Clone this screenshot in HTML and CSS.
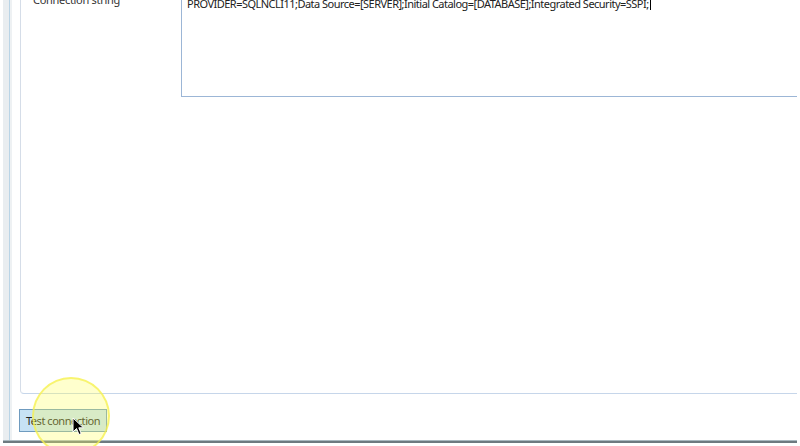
FILE: index.html
```html
<!DOCTYPE html>
<html lang="en">
<head>
    <meta charset="UTF-8">
    <title>Connection</title>
    <link rel="stylesheet" href="styles.css">
</head>
<body>
    <div class="window">
        <div class="edge"></div>
        <div class="main">
            <div class="panel">
                <div class="field">
                    <label class="f_label">Connection string</label>
                    <div class="f_box">
                        <p>PROVIDER=SQLNCLI11;Data Source=[SERVER];Initial Catalog=[DATABASE];Integrated Security=SSPI;<span class="caret"></span></p>
                    </div>
                </div>
            </div>
            <div class="footer">
                <button class="btn">Test connection</button>
            </div>
        </div>
    </div>
    <div class="bottom_line"></div>
    <!-- click highlight + mouse pointer -->
    <div class="spot"></div>
    <svg class="pointer" width="14" height="20" viewBox="0 0 14 20">
        <path d="M1 1 L1 15 L4.5 11.5 L7 17.5 L9.2 16.6 L6.8 10.8 L11.5 10.8 Z" fill="#000" stroke="#fff" stroke-width="1"/>
    </svg>
</body>
</html>
```

FILE: styles.css
```css
html, body {
    margin: 0;
    padding: 0;
    background: #fff;
    overflow: hidden;
}
body {
    width: 800px;
    height: 446px;
    position: relative;
    font-family: "Noto Sans", "Open Sans", sans-serif;
    color: #1e1e1e;
}
.window {
    display: flex;
    height: 440px;
}
.edge {
    width: 6px;
    margin-left: 3px;
    background: #e9edf0;
    border-right: 1px solid #b9d4e6;
    box-shadow: 2px 0 0 #eef1f3;
}
.main {
    flex: 1;
    display: flex;
    flex-direction: column;
    padding-left: 10px;
    padding-right: 3px;
}
.panel {
    height: 394px;
    border-left: 1px solid #d5dde8;
    border-bottom: 1px solid #c6d6ea;
    border-bottom-left-radius: 4px;
    box-sizing: border-box;
}
.field {
    display: flex;
    margin-top: -7px;
}
.f_label {
    width: 148px;
    padding-left: 12px;
    font-size: 11px;
    line-height: 14px;
    letter-spacing: -0.3px;
    color: #333;
}
.f_box {
    flex: 1;
    height: 104px;
    border-left: 1px solid #9cb6d6;
    border-bottom: 1px solid #9cb6d6;
    box-sizing: border-box;
}
.f_box p {
    margin: 0;
    padding: 4px 5px;
    font-size: 11px;
    line-height: 14px;
    letter-spacing: -0.52px;
    color: #222;
}
.caret {
    display: inline-block;
    width: 1px;
    height: 12px;
    margin-left: 1px;
    vertical-align: -2px;
    background: #000;
}
.footer {
    flex: 1;
    display: flex;
    align-items: center;
}
.btn {
    width: 88px;
    height: 23px;
    margin-top: 6px;
    margin-left: -1px;
    padding: 0;
    border: 1px solid #6f9bbf;
    background: #c7e2f5;
    font-family: inherit;
    font-size: 11px;
    letter-spacing: -0.45px;
    color: #222;
    outline: none;
}
.bottom_line {
    height: 2px;
    margin: 0 3px;
    background: #6d7a80;
    border-top: 1px solid #a9b9c0;
}
.spot {
    position: absolute;
    left: 32px;
    top: 377px;
    width: 74px;
    height: 74px;
    border-radius: 50%;
    background: rgba(255, 255, 90, 0.3);
    border: 2px solid rgba(245, 240, 80, 0.75);
}
.pointer {
    position: absolute;
    left: 72px;
    top: 417px;
}
```
